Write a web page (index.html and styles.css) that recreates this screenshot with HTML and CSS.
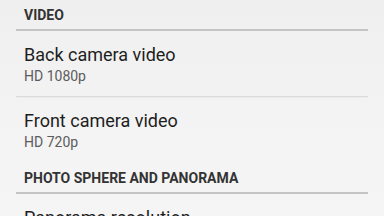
FILE: index.html
```html
<!DOCTYPE html>
<html>
<head>
<meta charset="utf-8">
<link rel="stylesheet" href="styles.css">
</head>
<body>
<div class="screen">
  <div class="category">VIDEO</div>
  <div class="pref">
    <div class="title">Back camera video</div>
    <div class="summary">HD 1080p</div>
  </div>
  <div class="pref last">
    <div class="title">Front camera video</div>
    <div class="summary">HD 720p</div>
  </div>
  <div class="category">PHOTO SPHERE AND PANORAMA</div>
  <div class="pref">
    <div class="title">Panorama resolution</div>
    <div class="summary">High</div>
  </div>
</div>
</body>
</html>
```
FILE: styles.css
```css
html, body {
  margin: 0;
  padding: 0;
}
body {
  width: 384px;
  height: 216px;
  overflow: hidden;
  background: linear-gradient(180deg, #efefef 0%, #f3f3f3 50%, #f5f5f5 100%);
  font-family: Roboto, "Noto Sans", "Liberation Sans", sans-serif;
}
.screen {
  display: flex;
  flex-direction: column;
}
.category {
  margin: 0 16px;
  padding: 2px 0 0 8px;
  height: 27px;
  line-height: 27px;
  font-size: 14px;
  font-weight: 700;
  color: #333333;
  border-bottom: 2px solid #c4c4c4;
}
.pref {
  margin: 0 16px;
  padding: 13px 0 10px 8px;
  border-bottom: 1px solid #dadada;
  box-shadow: 0 2px 0 -1px #ececec;
}
.pref.last {
  border-bottom-color: transparent;
  box-shadow: none;
}
.title {
  font-size: 18px;
  line-height: 22px;
  color: #1e1e1e;
}
.summary {
  font-size: 14px;
  line-height: 20px;
  color: #5c5c5c;
}
```
